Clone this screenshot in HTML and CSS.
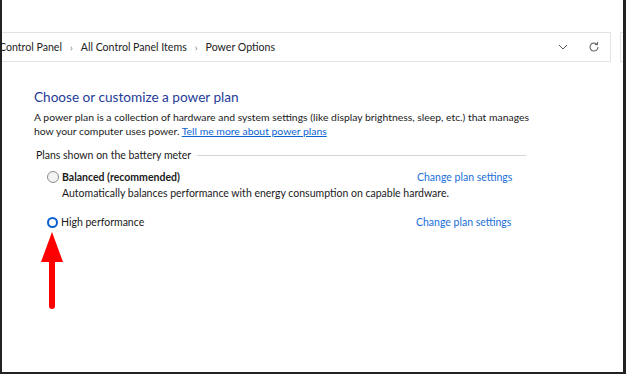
FILE: index.html
```html
<!DOCTYPE html>
<html lang="en">
<head>
  <meta charset="UTF-8" />
  <title>Power Options</title>
  <link rel="stylesheet" href="styles.css">
</head>
<body>
  <div class="frame">
    <div class="toolbar">
      <div class="address">
        <div class="crumbs">
          <span>Control Panel</span>
          <span class="sep">›</span>
          <span>All Control Panel Items</span>
          <span class="sep">›</span>
          <span>Power Options</span>
        </div>
        <svg class="drop" width="10" height="6" viewBox="0 0 10 6"><path d="M1 1 L5 5 L9 1" fill="none" stroke="#555" stroke-width="1"/></svg>
        <svg class="refresh" width="12" height="12" viewBox="0 0 12 12"><path d="M10 6 A4 4 0 1 1 8.6 3" fill="none" stroke="#666" stroke-width="1.1"/><path d="M9.6 1 L9.4 3.6 L6.8 3.4" fill="none" stroke="#666" stroke-width="1.1"/></svg>
      </div>
      <div class="search"></div>
    </div>

    <div class="content">
      <h1 class="title">Choose or customize a power plan</h1>
      <p class="intro">A power plan is a collection of hardware and system settings (like display brightness, sleep, etc.) that manages how your computer uses power. <a href="#">Tell me more about power plans</a></p>

      <div class="group-head">
        <span>Plans shown on the battery meter</span>
        <div class="rule"></div>
      </div>

      <div class="plan">
        <div class="plan-row">
          <span class="radio"></span>
          <span class="plan-name bold">Balanced (recommended)</span>
          <a href="#" class="change">Change plan settings</a>
        </div>
        <div class="plan-desc">Automatically balances performance with energy consumption on capable hardware.</div>
      </div>

      <div class="plan">
        <div class="plan-row">
          <span class="radio checked"></span>
          <span class="plan-name">High performance</span>
          <a href="#" class="change">Change plan settings</a>
        </div>
      </div>

      <svg class="arrow" width="24" height="80" viewBox="0 0 24 80">
        <path d="M12 0 L23 30 L1 30 Z" fill="#f00"/>
        <rect x="9" y="28" width="6" height="49" rx="3" fill="#f00"/>
      </svg>
    </div>
  </div>
</body>
</html>
```

FILE: styles.css
```css
body {
  margin: 0;
  font-family: Lato, 'Noto Sans', sans-serif;
  color: #1a1a1a;
  background: #fff;
}
.frame {
  height: 372px;
  border-left: 2px solid #222;
  border-right: 3px solid #222;
  border-bottom: 2px solid #222;
  overflow: hidden;
  background: #fff;
}
.toolbar {
  display: flex;
  gap: 9px;
  padding-top: 32px;
}
.address {
  flex: none;
  box-sizing: border-box;
  width: 611px;
  margin-left: -2px;
  height: 30px;
  border: 1px solid #e3e3e3;
  display: flex;
  align-items: center;
  font-size: 10.6px;
  color: #222;
}
.crumbs {
  flex: 1;
  display: flex;
  gap: 8px;
  margin-left: -2px;
}
.sep {
  color: #777;
  font-size: 10px;
}
.drop {
  margin-right: 20px;
}
.refresh {
  margin-right: 10px;
}
.search {
  flex: none;
  width: 30px;
  height: 30px;
  box-sizing: border-box;
  border: 1px solid #e3e3e3;
}
.content {
  padding-left: 32px;
}
.title {
  margin: 26px 0 0;
  font-size: 13.6px;
  line-height: 18px;
  font-weight: 400;
  color: #1f3c98;
}
.intro {
  margin: 4px 0 0;
  width: 505px;
  font-size: 10.4px;
  line-height: 14px;
}
.intro a {
  color: #0a64d2;
}
.group-head {
  display: flex;
  align-items: center;
  gap: 6px;
  margin-top: 10px;
  width: 490px;
  padding-left: 2px;
  font-size: 10.5px;
  line-height: 14px;
}
.rule {
  flex: 1;
  border-top: 1px solid #d6d6d6;
}
.plan {
  margin-top: 7px;
  padding-left: 13px;
}
.plan + .plan {
  margin-top: 14px;
}
.plan-row {
  display: flex;
  align-items: center;
  font-size: 10.5px;
  height: 16px;
}
.radio {
  width: 10px;
  height: 10px;
  border: 1px solid #8a8a8a;
  border-radius: 50%;
  background: #f3f3f3;
  margin-right: 3px;
}
.radio.checked {
  border: 2.5px solid #0a5fd0;
  width: 7px;
  height: 7px;
  background: #fff;
}
.plan-name {
  width: 355px;
}
.bold {
  font-weight: 700;
}
.change {
  color: #1a6fd8;
  text-decoration: none;
}
.plan-desc {
  margin-top: 1px;
  padding-left: 15px;
  font-size: 10.5px;
  line-height: 14px;
}
.arrow {
  display: block;
  margin: 2px 0 0 6px;
}
```
